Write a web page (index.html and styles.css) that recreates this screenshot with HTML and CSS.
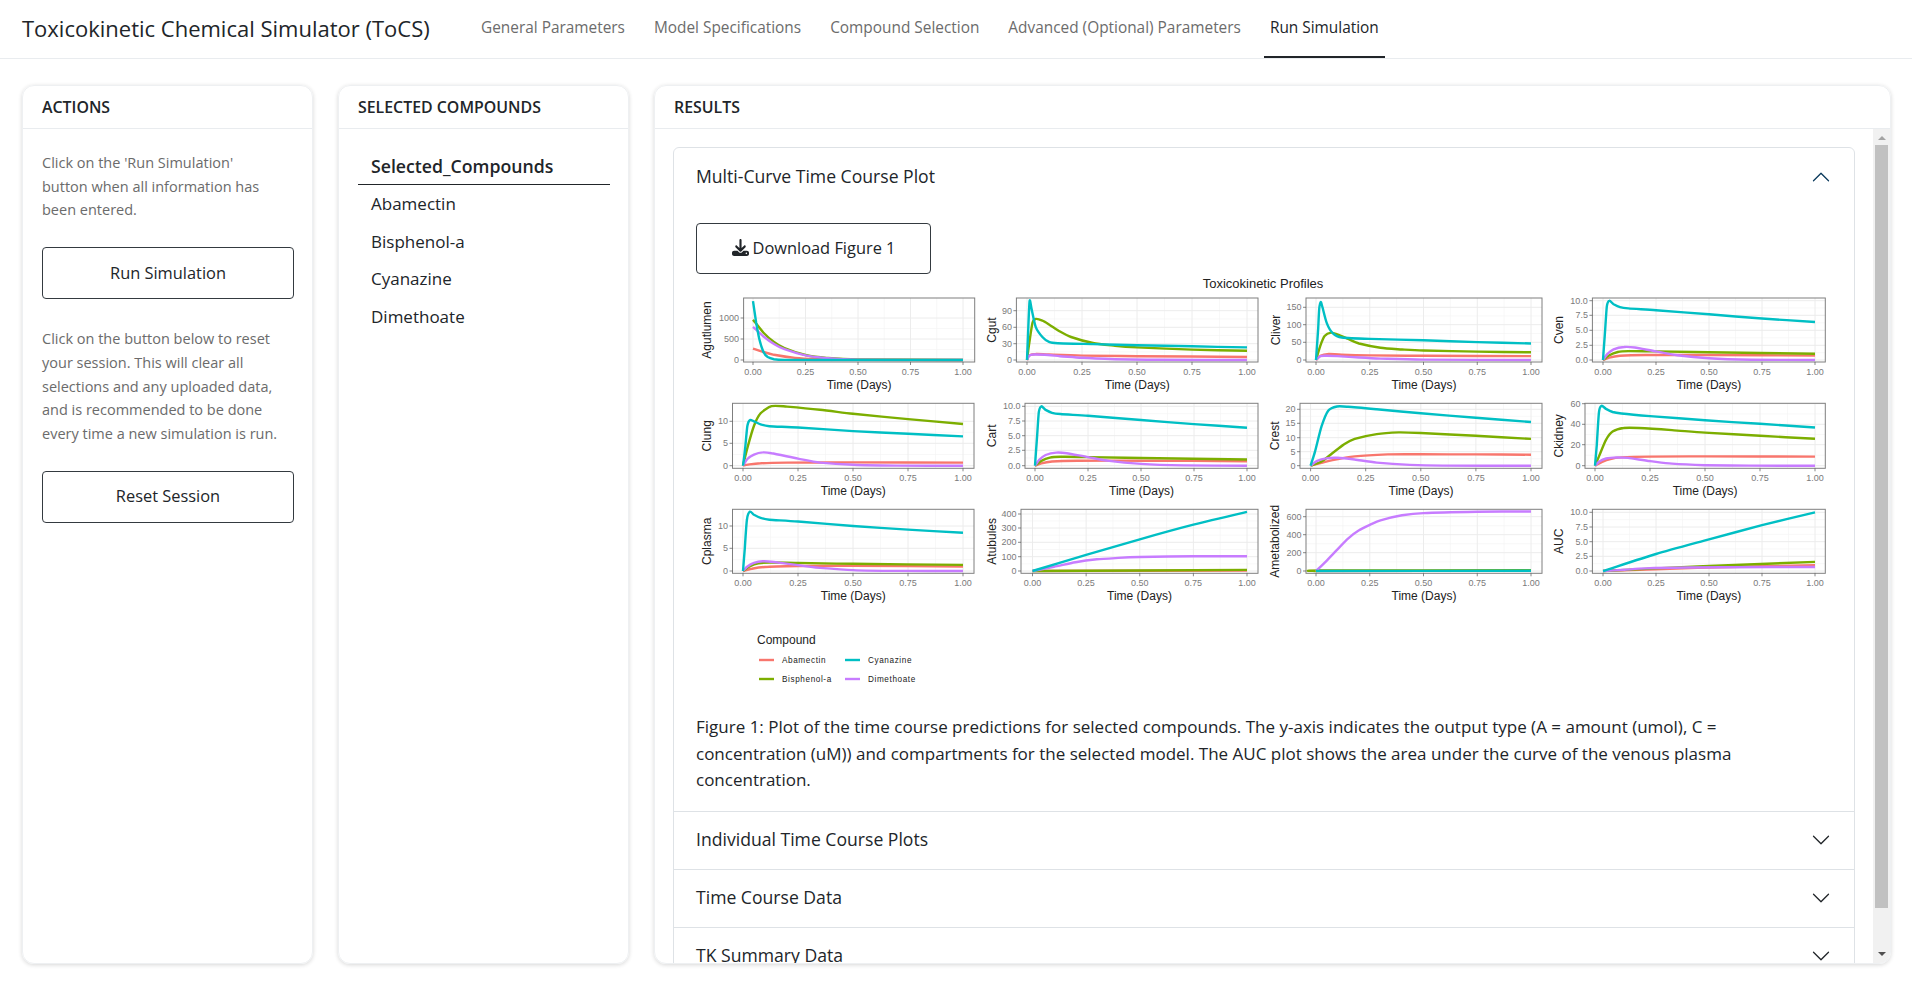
FILE: index.html
```html
<!DOCTYPE html>
<html lang="en">
<head>
  <meta charset="UTF-8">
  <meta name="viewport" content="width=device-width, initial-scale=1.0">
  <title>Toxicokinetic Chemical Simulator (ToCS)</title>
  <link rel="stylesheet" href="styles.css">
</head>
<body>

<nav class="navbar">
  <span class="brand">Toxicokinetic Chemical Simulator (ToCS)</span>
  <ul class="nav-links">
    <li><a href="#">General Parameters</a></li>
    <li><a href="#">Model Specifications</a></li>
    <li><a href="#">Compound Selection</a></li>
    <li><a href="#">Advanced (Optional) Parameters</a></li>
    <li><a href="#" class="active">Run Simulation</a></li>
  </ul>
</nav>

<main class="page">
  <section class="card">
    <header class="card-header">ACTIONS</header>
    <div class="card-body">
      <p class="help">Click on the 'Run Simulation'<br>button when all information has<br>been entered.</p>
      <button class="btn btn-wide">Run Simulation</button>
      <p class="help help-reset">Click on the button below to reset your session. This will clear all selections and any uploaded data, and is recommended to be done every time a new simulation is run.</p>
      <button class="btn btn-wide">Reset Session</button>
    </div>
  </section>

  <section class="card">
    <header class="card-header">SELECTED COMPOUNDS</header>
    <div class="card-body">
      <table class="compounds">
        <thead>
          <tr><th>Selected_Compounds</th></tr>
        </thead>
        <tbody>
          <tr><td>Abamectin</td></tr>
          <tr><td>Bisphenol-a</td></tr>
          <tr><td>Cyanazine</td></tr>
          <tr><td>Dimethoate</td></tr>
        </tbody>
      </table>
    </div>
  </section>

  <section class="card">
    <header class="card-header">RESULTS</header>
    <div class="results-body">
      <div class="results-scroll">
        <div class="accordion">
          <div class="acc-item">
            <div class="acc-head">
              <span>Multi-Curve Time Course Plot</span>
              <svg class="chevron chevron-open" viewBox="0 0 16 16"><path d="M1.646 4.646a.5.5 0 0 1 .708 0L8 10.293l5.646-5.647a.5.5 0 0 1 .708.708l-6 6a.5.5 0 0 1-.708 0l-6-6a.5.5 0 0 1 0-.708z"/></svg>
            </div>
            <div class="acc-body">
              <button class="btn btn-download">
                <svg class="dl-icon" viewBox="0 0 512 512"><path d="M288 32c0-17.7-14.3-32-32-32s-32 14.3-32 32V274.7l-73.4-73.4c-12.5-12.5-32.8-12.5-45.3 0s-12.5 32.8 0 45.3l128 128c12.5 12.5 32.8 12.5 45.3 0l128-128c12.5-12.5 12.5-32.8 0-45.3s-32.8-12.5-45.3 0L288 274.7V32zM64 352c-35.3 0-64 28.7-64 64v32c0 35.3 28.7 64 64 64H448c35.3 0 64-28.7 64-64V416c0-35.3-28.7-64-64-64H346.5l-45.3 45.3c-25 25-65.5 25-90.5 0L165.5 352H64zm368 56a24 24 0 1 1 0 48 24 24 0 1 1 0-48z"/></svg>
                Download Figure 1
              </button>
              <svg id="plot" class="plot" viewBox="696 275 1135 434"></svg>
              <p class="caption">Figure 1: Plot of the time course predictions for selected compounds. The y-axis indicates the output type (A = amount (umol), C = concentration (uM)) and compartments for the selected model. The AUC plot shows the area under the curve of the venous plasma concentration.</p>
            </div>
          </div>
          <div class="acc-item">
            <div class="acc-head">
              <span>Individual Time Course Plots</span>
              <svg class="chevron" viewBox="0 0 16 16"><path d="M1.646 4.646a.5.5 0 0 1 .708 0L8 10.293l5.646-5.647a.5.5 0 0 1 .708.708l-6 6a.5.5 0 0 1-.708 0l-6-6a.5.5 0 0 1 0-.708z"/></svg>
            </div>
          </div>
          <div class="acc-item">
            <div class="acc-head">
              <span>Time Course Data</span>
              <svg class="chevron" viewBox="0 0 16 16"><path d="M1.646 4.646a.5.5 0 0 1 .708 0L8 10.293l5.646-5.647a.5.5 0 0 1 .708.708l-6 6a.5.5 0 0 1-.708 0l-6-6a.5.5 0 0 1 0-.708z"/></svg>
            </div>
          </div>
          <div class="acc-item">
            <div class="acc-head">
              <span>TK Summary Data</span>
              <svg class="chevron" viewBox="0 0 16 16"><path d="M1.646 4.646a.5.5 0 0 1 .708 0L8 10.293l5.646-5.647a.5.5 0 0 1 .708.708l-6 6a.5.5 0 0 1-.708 0l-6-6a.5.5 0 0 1 0-.708z"/></svg>
            </div>
          </div>
        </div>
      </div>
      <div class="scrollbar">
        <span class="arrow-up"></span>
        <span class="thumb"></span>
        <span class="arrow-down"></span>
      </div>
    </div>
  </section>
</main>

<script src="plot.js"></script>
</body>
</html>
```

FILE: styles.css
```css
* {
  box-sizing: border-box;
}

html, body {
  height: 100%;
}

body {
  margin: 0;
  display: flex;
  flex-direction: column;
  overflow: hidden;
  background-color: #fff;
  color: #212529;
  font-family: 'Open Sans', 'Noto Sans', sans-serif;
  font-size: 16px;
}

/* top bar */
.navbar {
  display: flex;
  align-items: stretch;
  height: 59px;
  padding-left: 22px;
  border-bottom: 1px solid #e9ecef;
  flex-shrink: 0;
}

.brand {
  align-self: center;
  width: 453px;
  margin-top: -2px;
  font-size: 22px;
  white-space: nowrap;
}

.nav-links {
  display: flex;
  gap: 17px;
  margin: 0;
  padding: 0;
  list-style: none;
}

.nav-links a {
  display: block;
  height: 58px;
  padding: 17px 6px 0;
  border-bottom: 2px solid transparent;
  color: #6c6c6c;
  font-size: 15.4px;
  text-decoration: none;
}

.nav-links a.active {
  border-bottom-color: #212529;
  color: #212529;
  font-weight: 500;
}

/* three cards */
.page {
  display: grid;
  grid-template-columns: 291px 291px 1fr;
  gap: 25px;
  flex: 1;
  min-height: 0;
  padding: 26px 21px 24px 22px;
}

.card {
  display: flex;
  flex-direction: column;
  min-height: 0;
  overflow: hidden;
  border: 1px solid #eef0f2;
  border-radius: 12px;
  box-shadow: 0 1px 4px rgba(0, 0, 0, 0.16);
}

.card-header {
  flex-shrink: 0;
  height: 43px;
  padding: 10px 19px 0;
  border-bottom: 1px solid #e9ecef;
  font-size: 15.9px;
  font-weight: 600;
}

.card-body {
  padding: 22px 18px 22px 19px;
}

.help {
  margin: 0;
  color: #6b6b6b;
  font-size: 14.5px;
  line-height: 23.7px;
}

.help-reset {
  margin-top: 28px;
}

.btn {
  padding: 0 0 2px;
  background-color: #fff;
  border: 1px solid #343a40;
  border-radius: 4px;
  color: #212529;
  font-family: inherit;
  font-size: 16.4px;
  cursor: pointer;
}

.btn-wide {
  display: block;
  width: 100%;
  height: 52px;
  margin-top: 25px;
}

/* compounds table */
.compounds {
  width: 100%;
  margin-top: -3px;
  border-collapse: collapse;
}

.compounds th, .compounds td {
  padding: 0 13px;
  text-align: left;
  font-size: 17px;
}

.compounds th {
  height: 36px;
  border-bottom: 1px solid #212529;
  font-size: 17.7px;
  font-weight: 600;
}

.compounds tbody tr:first-child td {
  height: 38.6px;
}

.compounds td {
  height: 37.4px;
}

/* results */
.results-body {
  display: flex;
  flex: 1;
  min-height: 0;
}

.results-scroll {
  flex: 1;
  min-width: 0;
  overflow: hidden;
  padding: 18px 18px 0 18px;
}

.accordion {
  border: 1px solid #dee2e6;
  border-radius: 6px;
}

.acc-item + .acc-item {
  border-top: 1px solid #dee2e6;
}

.acc-head {
  display: flex;
  align-items: center;
  justify-content: space-between;
  height: 57px;
  padding: 0 23px 0 22px;
  font-size: 17.6px;
}

.acc-head span {
  margin-top: -2px;
}

.chevron {
  width: 20px;
  height: 20px;
  fill: #212529;
}

.chevron-open {
  fill: #0b3a5c;
  transform: rotate(180deg);
}

.acc-body {
  padding: 18px 22px 17px;
}

.btn-download {
  display: flex;
  align-items: center;
  justify-content: center;
  gap: 4px;
  width: 235px;
  height: 51px;
}

.dl-icon {
  width: 17px;
  height: 17px;
  fill: #212529;
}

.plot {
  display: block;
  width: 1135px;
  height: 434px;
  margin-top: 1px;
  font-family: 'Liberation Sans', Arial, sans-serif;
}

.caption {
  margin: 5px 0 0;
  padding-right: 20px;
  font-size: 17px;
  line-height: 26.6px;
}

/* scrollbar drawn as a column beside the pane */
.scrollbar {
  display: flex;
  flex-direction: column;
  align-items: center;
  flex-shrink: 0;
  width: 17px;
  background-color: #f1f1f1;
}

.arrow-up, .arrow-down {
  flex-shrink: 0;
  width: 0;
  height: 0;
  border-left: 4px solid transparent;
  border-right: 4px solid transparent;
}

.arrow-up {
  margin: 7px 0 5px;
  border-bottom: 4px solid #a3a3a3;
}

.arrow-down {
  margin: auto 0 7px;
  border-top: 4px solid #505050;
}

.thumb {
  width: 13px;
  height: 763px;
  background-color: #c1c1c1;
}

/* plot text */
.tick-label {
  fill: #7a7a7a;
  font-size: 9px;
}

.axis-title {
  fill: #222;
  font-size: 12px;
}

.plot-title {
  fill: #222;
  font-size: 13px;
}

.legend-title {
  fill: #222;
  font-size: 12px;
}

.legend-label {
  fill: #222;
  font-size: 8.2px;
  letter-spacing: 0.6px;
}
```

FILE: plot.js
```js
const RED = '#F8766D', GREEN = '#7CAE00', TEAL = '#00BFC4', PURPLE = '#C77CFF';

// pixel positions come from the figure: frame, x of t=0 and t=1, y of each tick
const venRed = [[0,0],[.03,.4],[.08,.7],[.2,.85],[.5,.85],[1,.75]];
const venGreen = [[0,0],[.03,.8],[.07,1.35],[.12,1.5],[.25,1.45],[.5,1.3],[1,1.05]];
const venPurple = [[0,0],[.02,1],[.05,1.8],[.1,2.2],[.15,2.1],[.25,1.45],[.35,.8],[.5,.3],[.7,.05],[1,0]];
const venTeal = [[0,0],[.008,4],[.018,9],[.03,10],[.05,9.4],[.08,8.9],[.12,8.7],[.25,8.4],[.5,7.7],[.75,7],[1,6.4]];

const panels = [
  { name: 'Agutlumen', labelX: 707, frame: [743.6, 298, 974.7, 362], x0: 753, x1: 963,
    ticks: [[0, 360, '0'], [500, 339, '500'], [1000, 318, '1000']],
    red: [[0,270],[.05,190],[.1,125],[.2,50],[.3,20],[.5,3],[1,0]],
    green: [[0,960],[.05,650],[.1,430],[.15,285],[.25,120],[.35,50],[.5,12],[1,0]],
    purple: [[0,790],[.05,560],[.1,380],[.15,260],[.25,110],[.35,45],[.5,10],[1,0]],
    teal: [[0,1400],[.015,900],[.03,500],[.05,190],[.07,70],[.1,20],[.15,2],[.3,0],[1,0]] },
  { name: 'Cgut', labelX: 991.6, frame: [1016.4, 298, 1258, 362], x0: 1027, x1: 1247,
    ticks: [[0, 360, '0'], [30, 343.7, '30'], [60, 327.3, '60'], [90, 310.7, '90']],
    red: [[0,0],[.01,8],[.04,11],[.1,10],[.25,8],[.5,7],[1,5.5]],
    green: [[0,0],[.01,30],[.025,68],[.04,75],[.07,72],[.1,65],[.15,52],[.2,42],[.3,31],[.4,26],[.5,23],[.75,19],[1,17]],
    purple: [[0,0],[.01,8],[.03,10],[.08,9.5],[.15,7],[.25,4],[.4,1.5],[.6,.3],[1,0]],
    teal: [[0,0],[.005,50],[.012,108],[.02,95],[.04,60],[.07,42],[.1,33],[.14,30.5],[.3,29],[.5,27],[.75,25],[1,23]] },
  { name: 'Cliver', labelX: 1275.5, frame: [1306, 298, 1542, 362], x0: 1316, x1: 1531,
    ticks: [[0, 360, '0'], [50, 342.3, '50'], [100, 324.7, '100'], [150, 307.3, '150']],
    red: [[0,0],[.02,12],[.06,17],[.12,15],[.25,13],[.5,12],[1,11]],
    green: [[0,0],[.02,40],[.04,68],[.07,78],[.1,73],[.15,60],[.2,47],[.3,35],[.4,30],[.5,27],[.75,24],[1,22]],
    purple: [[0,0],[.02,11],[.05,12],[.1,11],[.2,7],[.3,4],[.5,1],[1,0]],
    teal: [[0,0],[.01,90],[.015,145],[.022,165],[.03,150],[.05,105],[.08,75],[.12,64],[.25,60],[.5,56],[.75,51],[1,47]] },
  { name: 'Cven', labelX: 1559, frame: [1592.4, 298, 1825.3, 362], x0: 1603, x1: 1815,
    ticks: [[0, 360, '0.0'], [2.5, 345.3, '2.5'], [5, 330.3, '5.0'], [7.5, 315.3, '7.5'], [10, 300.7, '10.0']],
    red: venRed, green: venGreen, purple: venPurple, teal: venTeal },

  { name: 'Clung', labelX: 707, frame: [732.5, 403.3, 974, 468.3], x0: 743, x1: 963,
    ticks: [[0, 465.7, '0'], [5, 443.3, '5'], [10, 421.3, '10']],
    red: [[0,0],[.03,.3],[.08,.55],[.2,.7],[.5,.75],[1,.7]],
    green: [[0,0],[.02,4],[.05,9],[.08,11.8],[.13,13.4],[.2,13.3],[.35,12.6],[.5,11.7],[.75,10.5],[1,9.4]],
    purple: [[0,0],[.02,1.5],[.05,2.5],[.09,3],[.13,2.8],[.25,1.6],[.35,.7],[.5,.2],[.7,.03],[1,0]],
    teal: [[0,0],[.01,4],[.02,9],[.032,10.3],[.05,10],[.08,9.3],[.12,8.9],[.25,8.6],[.5,7.8],[.75,7.2],[1,6.6]] },
  { name: 'Cart', labelX: 991.6, frame: [1025, 403.3, 1258, 468.3], x0: 1035, x1: 1247,
    ticks: [[0, 465.7, '0.0'], [2.5, 450.3, '2.5'], [5, 435.7, '5.0'], [7.5, 421, '7.5'], [10, 406.3, '10.0']],
    red: venRed, green: venGreen, purple: venPurple, teal: venTeal },
  { name: 'Crest', labelX: 1275.5, frame: [1300, 403.3, 1542, 468.3], x0: 1310.6, x1: 1531,
    ticks: [[0, 465.7, '0'], [5, 451.7, '5'], [10, 437.7, '10'], [15, 423.3, '15'], [20, 409.3, '20']],
    red: [[0,0],[.05,1],[.1,2],[.2,3.3],[.35,4],[.5,4.05],[.75,4],[1,3.9]],
    green: [[0,0],[.05,1.5],[.1,4.5],[.15,7.5],[.2,9.5],[.3,11.2],[.4,11.8],[.5,11.6],[.75,10.6],[1,9.5]],
    purple: [[0,0],[.03,1.7],[.07,2.6],[.12,2.8],[.2,2.2],[.3,1.1],[.45,.3],[.6,.05],[1,0]],
    teal: [[0,0],[.02,5],[.05,14],[.08,19.5],[.12,21],[.17,20.9],[.3,20],[.5,18.6],[.75,17],[1,15.5]] },
  { name: 'Ckidney', labelX: 1559, frame: [1585, 403.3, 1825.3, 468.3], x0: 1595, x1: 1815,
    ticks: [[0, 465.7, '0'], [20, 444.7, '20'], [40, 424.3, '40'], [60, 403.7, '60']],
    red: [[0,0],[.03,3.5],[.07,6.5],[.12,8],[.25,8.8],[.5,9],[1,8.8]],
    green: [[0,0],[.02,10],[.05,25],[.08,33],[.13,36.5],[.2,36.5],[.35,34.5],[.5,32],[.75,29],[1,26]],
    purple: [[0,0],[.02,4],[.05,7],[.1,8],[.15,7.5],[.25,4.5],[.35,2],[.5,.5],[.7,.05],[1,0]],
    teal: [[0,0],[.008,20],[.018,52],[.03,58],[.05,55],[.08,52],[.12,50.5],[.25,48],[.5,44],[.75,40.5],[1,37]] },

  { name: 'Cplasma', labelX: 707, frame: [732.5, 509.3, 974, 573.3], x0: 743, x1: 963,
    ticks: [[0, 571, '0'], [5, 548.3, '5'], [10, 526, '10']],
    red: [[0,0],[.04,.5],[.1,.9],[.25,1.1],[.5,1.15],[1,1]],
    green: [[0,0],[.03,1],[.07,1.7],[.12,1.9],[.25,1.8],[.5,1.6],[1,1.35]],
    purple: [[0,0],[.02,1],[.05,1.8],[.09,2.15],[.14,2],[.25,1.3],[.35,.7],[.5,.2],[.7,.03],[1,0]],
    teal: [[0,0],[.008,5],[.018,11.5],[.032,13.2],[.05,12.5],[.08,11.8],[.12,11.4],[.25,11],[.5,10],[.75,9.2],[1,8.5]] },
  { name: 'Atubules', labelX: 991.6, frame: [1021, 509.3, 1258, 573.3], x0: 1032.5, x1: 1247,
    ticks: [[0, 571, '0'], [100, 556.7, '100'], [200, 542.3, '200'], [300, 528, '300'], [400, 514, '400']],
    red: [[0,0],[1,3]],
    green: [[0,0],[1,8]],
    purple: [[0,0],[.1,30],[.2,62],[.3,82],[.4,92],[.5,98],[.75,103],[1,104]],
    teal: [[0,0],[.25,113],[.5,222],[.75,325],[1,415]] },
  { name: 'Ametabolized', labelX: 1275.5, frame: [1306, 509.3, 1542, 573.3], x0: 1316, x1: 1531,
    ticks: [[0, 571, '0'], [200, 552.7, '200'], [400, 534.7, '400'], [600, 516.7, '600']],
    red: [[0,0],[1,3]],
    green: [[0,0],[.02,5],[1,8]],
    purple: [[0,0],[.05,115],[.1,240],[.15,360],[.2,450],[.25,510],[.3,560],[.4,615],[.5,640],[.75,655],[1,657]],
    teal: [[0,0],[1,2]] },
  { name: 'AUC', labelX: 1559, frame: [1592.4, 509.3, 1825.3, 573.3], x0: 1603, x1: 1815,
    ticks: [[0, 571, '0.0'], [2.5, 556.3, '2.5'], [5, 541.7, '5.0'], [7.5, 527, '7.5'], [10, 512.3, '10.0']],
    red: [[0,0],[.25,.3],[.5,.6],[1,1]],
    green: [[0,0],[.25,.45],[.5,.85],[1,1.55]],
    purple: [[0,0],[.1,.2],[.2,.45],[.4,.6],[.6,.65],[1,.68]],
    teal: [[0,0],[.25,2.9],[.5,5.4],[.75,7.8],[1,10]] }
];

const svg = document.getElementById('plot');
let out = '';

function line(x1, y1, x2, y2, color, width) {
  out += `<line x1="${x1}" y1="${y1}" x2="${x2}" y2="${y2}" stroke="${color}" stroke-width="${width}"/>`;
}

function text(x, y, str, cls, anchor, rotate) {
  const turn = rotate ? ` transform="rotate(-90 ${x} ${y})"` : '';
  out += `<text x="${x}" y="${y}" class="${cls}" text-anchor="${anchor}" dominant-baseline="central"${turn}>${str}</text>`;
}

// catmull-rom through the points, tension kept low so the peaks don't ring
function curvePath(pts) {
  let d = `M${pts[0][0]} ${pts[0][1]}`;
  for (let i = 0; i < pts.length - 1; i++) {
    const p0 = pts[Math.max(i - 1, 0)], p1 = pts[i], p2 = pts[i + 1], p3 = pts[Math.min(i + 2, pts.length - 1)];
    const k = 0.12;
    const c1x = p1[0] + (p2[0] - p0[0]) * k, c1y = p1[1] + (p2[1] - p0[1]) * k;
    const c2x = p2[0] - (p3[0] - p1[0]) * k, c2y = p2[1] - (p3[1] - p1[1]) * k;
    d += `C${c1x.toFixed(1)} ${c1y.toFixed(1)} ${c2x.toFixed(1)} ${c2y.toFixed(1)} ${p2[0].toFixed(1)} ${p2[1].toFixed(1)}`;
  }
  return d;
}

panels.forEach(p => {
  const [left, top, right, bottom] = p.frame;
  const tx = t => p.x0 + (p.x1 - p.x0) * t;
  const first = p.ticks[0], last = p.ticks[p.ticks.length - 1];
  const vy = v => first[1] + (last[1] - first[1]) * (v - first[0]) / (last[0] - first[0]);

  // minor grid, then major grid
  [0.125, 0.375, 0.625, 0.875].forEach(t => line(tx(t), top, tx(t), bottom, '#f4f4f4', 0.6));
  p.ticks.forEach((tk, i) => {
    if (i > 0) {
      const mid = (tk[1] + p.ticks[i - 1][1]) / 2;
      line(left, mid, right, mid, '#f4f4f4', 0.6);
    }
  });
  [0, 0.25, 0.5, 0.75, 1].forEach(t => line(tx(t), top, tx(t), bottom, '#ececec', 1));
  p.ticks.forEach(tk => line(left, tk[1], right, tk[1], '#ececec', 1));

  // teal goes last, it sits over the others in the figure
  [[p.red, RED], [p.green, GREEN], [p.purple, PURPLE], [p.teal, TEAL]].forEach(([pts, color]) => {
    const px = pts.map(pt => [tx(pt[0]), vy(pt[1])]);
    out += `<path d="${curvePath(px)}" fill="none" stroke="${color}" stroke-width="2.4"/>`;
  });

  out += `<rect x="${left}" y="${top}" width="${right - left}" height="${bottom - top}" fill="none" stroke="#7f7f7f" stroke-width="1"/>`;

  // axes
  p.ticks.forEach(tk => {
    line(left - 3, tk[1], left, tk[1], '#555', 0.7);
    text(left - 4.5, tk[1], tk[2], 'tick-label', 'end');
  });
  ['0.00', '0.25', '0.50', '0.75', '1.00'].forEach(label => {
    const x = tx(parseFloat(label));
    line(x, bottom, x, bottom + 3, '#555', 0.7);
    text(x, bottom + 9.5, label, 'tick-label', 'middle');
  });
  text((left + right) / 2, bottom + 22.7, 'Time (Days)', 'axis-title', 'middle');
  text(p.labelX, (top + bottom) / 2, p.name, 'axis-title', 'middle', true);
});

text(1263, 283, 'Toxicokinetic Profiles', 'plot-title', 'middle');

// legend
text(757, 640, 'Compound', 'legend-title', 'start');
[[759, 660, RED, 'Abamectin'], [759, 679, GREEN, 'Bisphenol-a'], [845, 660, TEAL, 'Cyanazine'], [845, 679, PURPLE, 'Dimethoate']].forEach(([x, y, color, label]) => {
  line(x, y, x + 15, y, color, 2.4);
  text(x + 23, y, label, 'legend-label', 'start');
});

svg.innerHTML = out;
```
